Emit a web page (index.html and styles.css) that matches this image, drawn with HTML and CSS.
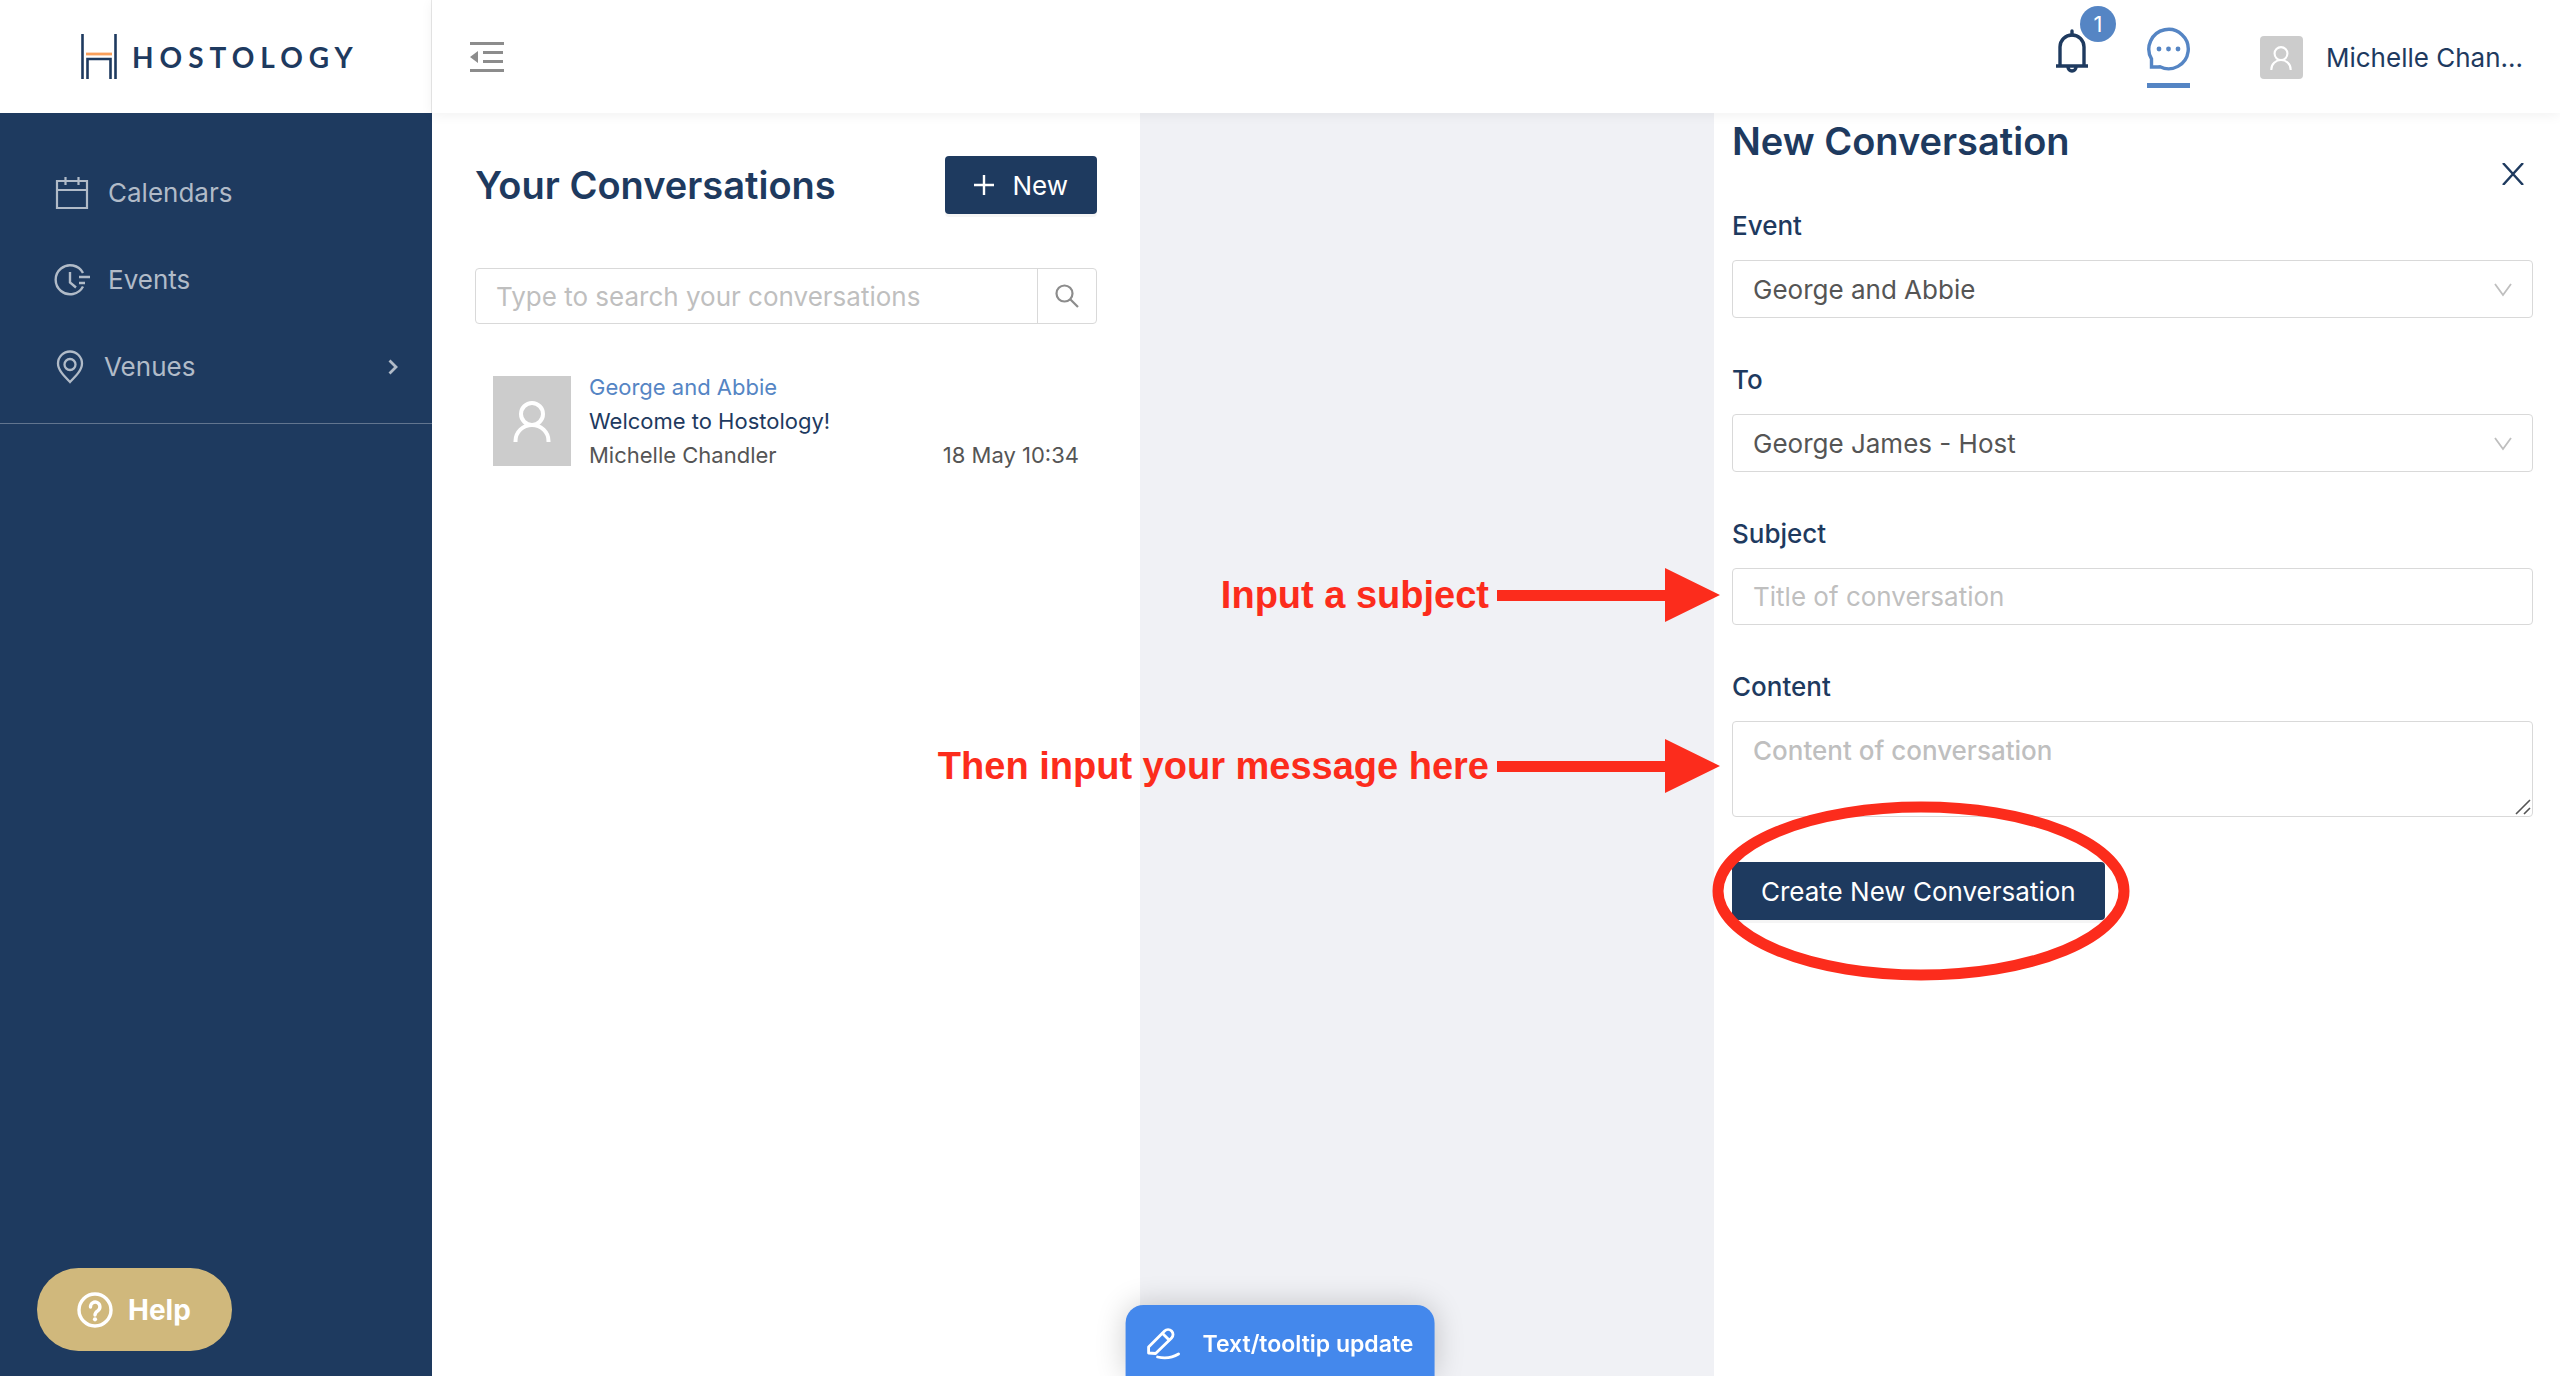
FILE: index.html
```html
<!DOCTYPE html>
<html lang="en">
<head>
  <meta charset="UTF-8" />
  <title>Hostology - Conversations</title>
  <link rel="stylesheet" href="styles.css">
</head>
<body>

  <aside class="sidebar">
    <a class="logo" href="#">
      <svg width="36" height="45" viewBox="0 0 36 45">
        <path d="M1.500 0v45M34.500 0v45M6.500 45V25H29.500V45" fill="none" stroke="#1e3a5f" stroke-width="2.600"/>
        <path d="M5 20h26" stroke="#f9a05c" stroke-width="2.800"/>
      </svg>
      <span>HOSTOLOGY</span>
    </a>
    <nav class="menu">
      <a href="#">
        <svg class="menu-icon" width="36" height="36" viewBox="0 0 36 36" fill="none" stroke="currentColor" stroke-width="2.200">
          <path d="M3 6h30v27H3zM3 15h30M11.500 2v8M24.500 2v8"/>
        </svg>
        Calendars
      </a>
      <a href="#">
        <svg class="menu-icon" width="36" height="36" viewBox="0 0 36 36" fill="none" stroke="currentColor" stroke-width="2.400">
          <path d="M29 11a14.500 14.500 0 1 0 0 13.500M16 10v10.500l6 5M25 15h11M25 21h6"/>
        </svg>
        Events
      </a>
      <a href="#">
        <svg class="menu-icon" width="32" height="36" viewBox="0 0 32 36" fill="none" stroke="currentColor" stroke-width="2.300">
          <path d="M16 33C10 27 4 21 4 14.500a12 12 0 0 1 24 0C28 21 22 27 16 33z"/>
          <circle cx="16" cy="15.500" r="5.500"/>
        </svg>
        Venues
        <svg class="menu-arrow" width="10" height="16" viewBox="0 0 10 16" fill="none" stroke="currentColor" stroke-width="2.800">
          <path d="M1.500 1.500L8 8l-6.500 6.500"/>
        </svg>
      </a>
    </nav>
  </aside>

  <div class="main">
    <header class="topbar">
      <button class="icon-btn" aria-label="Collapse menu">
        <svg width="34" height="30" viewBox="0 0 34 30" fill="#8c8c8c">
          <path d="M0 0h34v3H0zM13 9h20v3H13zM13 18h20v3H13zM0 27h34v3H0zM0 15l8-6v12z"/>
        </svg>
      </button>
      <div class="topbar-right">
        <button class="icon-btn bell" aria-label="Notifications">
          <svg width="34" height="44" viewBox="0 0 34 44" fill="none" stroke="#1e3a5f" stroke-width="3.400">
            <path d="M1 37h32M5 37V18a12 12 0 0 1 24 0v19"/>
            <path d="M17 6V2" stroke-linecap="round"/>
            <path d="M13 38a4 4 0 0 0 8 0"/>
          </svg>
          <span class="badge">1</span>
        </button>
        <button class="icon-btn chat" aria-label="Messages">
          <svg width="43" height="44" viewBox="0 0 43 44" fill="none" stroke="#5585c4" stroke-width="3.400">
            <path d="M4.500 40V31.900A19.700 19.700 0 1 1 13 39.800L11 40z"/>
            <g fill="#5585c4" stroke="none">
              <circle cx="12" cy="22" r="2.400"/><circle cx="21.500" cy="22" r="2.400"/><circle cx="31" cy="22" r="2.400"/>
            </g>
          </svg>
        </button>
        <a class="user" href="#">
          <span class="avatar-small">
            <svg width="22" height="24" viewBox="0 0 37 41" fill="none" stroke="#fff" stroke-width="3.600">
              <circle cx="18.500" cy="13" r="11"/>
              <path d="M2 41v-1a16.500 16 0 0 1 33 0v1"/>
            </svg>
          </span>
          Michelle Chan...
        </a>
      </div>
    </header>

    <div class="columns">
      <section class="list">
        <div class="list-head">
          <h2>Your Conversations</h2>
          <button class="btn">
            <svg width="20" height="20" viewBox="0 0 20 20" stroke="#fff" stroke-width="2.400">
              <path d="M10 0v20M0 10h20"/>
            </svg>
            New
          </button>
        </div>
        <form class="search">
          <input type="text" aria-label="Search conversations" placeholder="Type to search your conversations">
          <button type="button" aria-label="Search">
            <svg width="24" height="24" viewBox="0 0 24 24" fill="none" stroke="#8c8c8c" stroke-width="2.200">
              <circle cx="9.500" cy="9.500" r="8"/>
              <path d="M15.500 15.500l7.500 7.500"/>
            </svg>
          </button>
        </form>
        <article class="conversation">
          <div class="avatar">
            <svg width="38" height="41" viewBox="0 0 37 41" fill="none" stroke="#fff" stroke-width="4">
              <circle cx="18.500" cy="13" r="11"/>
              <path d="M2 41v-1a16.500 16 0 0 1 33 0v1"/>
            </svg>
          </div>
          <div class="conversation-text">
            <a class="event-name" href="#">George and Abbie</a>
            <div>Welcome to Hostology!</div>
            <div class="meta"><span>Michelle Chandler</span><span>18 May 10:34</span></div>
          </div>
        </article>
      </section>

      <section class="thread"></section>

      <section class="panel">
        <h2>New Conversation</h2>
        <button class="icon-btn close" aria-label="Close">
          <svg width="22" height="22" viewBox="0 0 22 22" stroke="#1e3a5f" stroke-width="2.400">
            <path d="M1 0l20 22M21 0L1 22"/>
          </svg>
        </button>
        <form>
          <div class="field">
            <label for="event">Event</label>
            <div class="control">
              <select id="event"><option>George and Abbie</option></select>
              <svg class="caret" width="18" height="14" viewBox="0 0 18 14" fill="none" stroke="#bfbfbf" stroke-width="1.800"><path d="M1 1l8 11 8-11"/></svg>
            </div>
          </div>
          <div class="field">
            <label for="to">To</label>
            <div class="control">
              <select id="to"><option>George James - Host</option></select>
              <svg class="caret" width="18" height="14" viewBox="0 0 18 14" fill="none" stroke="#bfbfbf" stroke-width="1.800"><path d="M1 1l8 11 8-11"/></svg>
            </div>
          </div>
          <div class="field">
            <label for="subject">Subject</label>
            <div class="control">
              <input id="subject" type="text" placeholder="Title of conversation">
              <div class="note">
                Input a subject
                <svg width="223" height="54" viewBox="0 0 223 54" fill="#fc2c1c"><path d="M0 22h168V0l55 27-55 27V33H0z"/></svg>
              </div>
            </div>
          </div>
          <div class="field">
            <label for="content">Content</label>
            <div class="control">
              <textarea id="content" placeholder="Content of conversation"></textarea>
              <svg class="grip" width="16" height="16" viewBox="0 0 16 16" stroke="#555" stroke-width="1.600"><path d="M1 15L15 1M9 15l6-6"/></svg>
              <div class="note">
                Then input your message here
                <svg width="223" height="54" viewBox="0 0 223 54" fill="#fc2c1c"><path d="M0 22h168V0l55 27-55 27V33H0z"/></svg>
              </div>
            </div>
          </div>
          <div class="submit">
            <button type="button" class="btn">Create New Conversation</button>
            <svg class="circle" viewBox="0 0 418 180" fill="none" stroke="#fc2c1c" stroke-width="11"><ellipse cx="209" cy="90" rx="203" ry="84"/></svg>
          </div>
        </form>
      </section>
    </div>
  </div>

  <button class="help">
    <svg width="36" height="36" viewBox="0 0 36 36" fill="none" stroke="#fff" stroke-width="3.400">
      <circle cx="18" cy="18" r="16"/>
      <path d="M13.500 15a4.700 4.700 0 1 1 7.500 3.600c-2 1.400-3 2.200-3 4.400" stroke-linecap="round"/>
      <circle cx="18" cy="27.300" r="2.100" fill="#fff" stroke="none"/>
    </svg>
    Help
  </button>

  <div class="update-bar">
    <svg width="34" height="32" viewBox="0 0 34 32" fill="none" stroke="#fff" stroke-width="2.800">
      <path d="M2 25v-6L18 3a4.600 4.600 0 0 1 7 7L9 25.500z" stroke-linejoin="round"/>
      <path d="M16 5.500l6.500 6.500M11 29c9 2 16 0 21-3" stroke-linecap="round"/>
    </svg>
    Text/tooltip update
  </div>

</body>
</html>
```
FILE: styles.css
```css
* {
  box-sizing: border-box;
}
body {
  margin: 0;
  min-height: 100vh;
  display: flex;
  font-family: Inter, "Liberation Sans", sans-serif;
  font-size: 26px;
  color: #1e3a5f;
  background: white;
}
a {
  color: inherit;
  text-decoration: none;
}
button, input, select, textarea {
  font: inherit;
}
svg {
  flex-shrink: 0;
}
h2 {
  margin: 0;
  font-size: 38px;
  font-weight: 600;
  line-height: 56px;
}

/* Sidebar */
.sidebar {
  flex: 0 0 432px;
  background: #1e3a5f;
}
.logo {
  height: 113px;
  padding-left: 81px;
  display: flex;
  align-items: center;
  gap: 15px;
  background: white;
  color: #1e3a5f;
  border-right: 1px solid #e8e8e8;
  font-family: Lato, sans-serif;
  font-size: 28px;
  font-weight: bold;
  letter-spacing: 6px;
}
.menu {
  padding: 36px 0 13px;
  border-bottom: 1px solid #62758f;
  color: #b1bbc8;
}
.menu a {
  height: 87px;
  padding: 0 34px 0 54px;
  display: flex;
  align-items: center;
  gap: 18px;
}
.menu-arrow {
  margin-left: auto;
}

/* Top bar */
.main {
  flex: 1;
  min-width: 0;
  display: flex;
  flex-direction: column;
}
.topbar {
  height: 113px;
  padding: 0 37px 0 38px;
  display: flex;
  align-items: center;
  justify-content: space-between;
  box-shadow: 0 2px 12px rgba(0,0,0,0.06);
  position: relative;
}
.icon-btn {
  padding: 0;
  border: none;
  background: none;
  display: flex;
  cursor: pointer;
}
.topbar-right {
  height: 113px;
  display: flex;
  align-items: flex-start;
}
.bell {
  margin: 29px 58px 0 0;
  position: relative;
}
.badge {
  position: absolute;
  left: 25px;
  top: -23px;
  width: 36px;
  height: 36px;
  border-radius: 50%;
  background: #5585c4;
  color: white;
  font-size: 22px;
  line-height: 36px;
}
.chat {
  margin-top: 27px;
  padding-bottom: 12px;
  border-bottom: 5px solid #5585c4;
}
.user {
  margin: 36px 0 0 70px;
  display: flex;
  align-items: center;
  gap: 23px;
}
.avatar-small {
  width: 43px;
  height: 43px;
  display: flex;
  align-items: center;
  justify-content: center;
  background: #ccc;
  border-radius: 4px;
}

/* Columns */
.columns {
  flex: 1;
  display: grid;
  grid-template-columns: 354fr 287fr 423fr;
}
.thread {
  background: #f0f1f5;
}

/* Conversation list */
.list {
  padding: 43px;
}
.list-head {
  display: flex;
  align-items: center;
  justify-content: space-between;
}
.btn {
  height: 58px;
  padding: 0 29px;
  display: flex;
  align-items: center;
  gap: 18px;
  background: #1e3a5f;
  color: white;
  border: none;
  border-radius: 4px;
  box-shadow: 0 3px 0 rgba(0,0,0,0.04);
  cursor: pointer;
}
.search {
  margin: 54px 0 46px;
  height: 56px;
  display: flex;
  border: 1px solid #d9d9d9;
  border-radius: 4px;
}
.search input {
  flex: 1;
  min-width: 0;
  padding: 0 20px;
  border: none;
  background: none;
}
.search button {
  width: 59px;
  padding: 0;
  display: flex;
  align-items: center;
  justify-content: center;
  border: none;
  border-left: 1px solid #d9d9d9;
  background: none;
}
::placeholder {
  color: #bfbfbf;
  opacity: 1;
}
.conversation {
  padding: 0 18px;
  display: flex;
  align-items: center;
  gap: 18px;
  font-size: 22px;
  line-height: 34px;
}
.avatar {
  width: 78px;
  height: 90px;
  display: flex;
  align-items: center;
  justify-content: center;
  background: #ccc;
}
.conversation-text {
  flex: 1;
}
.event-name {
  color: #5585c4;
}
.meta {
  display: flex;
  justify-content: space-between;
  color: #555;
}

/* New conversation panel */
.panel {
  padding: 0 27px 0 18px;
  position: relative;
}
.panel h2 {
  margin-bottom: 40px;
}
.close {
  position: absolute;
  top: 50px;
  right: 36px;
}
.field {
  margin-bottom: 45px;
}
.field label {
  display: block;
  margin-bottom: 17px;
  line-height: 34px;
  font-weight: 500;
}
.control {
  position: relative;
}
.control select,
.control input,
.control textarea {
  display: block;
  width: 100%;
  height: 57px;
  padding: 0 20px;
  border: 1px solid #d9d9d9;
  border-radius: 4px;
  background: white;
  color: #555;
}
.control select {
  height: 58px;
  appearance: none;
}
.control textarea {
  height: 96px;
  padding-top: 12px;
  line-height: 34px;
  font-weight: 500;
  resize: none;
}
.caret {
  position: absolute;
  right: 21px;
  top: 23px;
}
.grip {
  position: absolute;
  right: 2px;
  bottom: 2px;
}
.submit {
  width: fit-content;
  position: relative;
}

/* Red notes over the page */
.note {
  position: absolute;
  right: 100%;
  top: 0;
  margin-right: 12px;
  display: flex;
  align-items: center;
  gap: 8px;
  color: #fc2c1c;
  font-family: "Liberation Sans", Arial, sans-serif;
  font-size: 38px;
  font-weight: bold;
  white-space: nowrap;
}
textarea ~ .note {
  top: 18px;
}
.circle {
  position: absolute;
  left: -20px;
  top: -61px;
  width: 418px;
  height: 180px;
  pointer-events: none;
}

/* Floating buttons */
.help {
  position: fixed;
  left: 37px;
  bottom: 25px;
  width: 195px;
  height: 83px;
  padding: 0 0 0 40px;
  display: flex;
  align-items: center;
  gap: 15px;
  border: none;
  border-radius: 42px;
  background: #d0b87c;
  color: white;
  font-size: 28px;
  font-weight: bold;
}
.update-bar {
  position: fixed;
  left: 50%;
  bottom: 0;
  transform: translateX(-50%);
  height: 71px;
  padding: 6px 21px 0;
  display: flex;
  align-items: center;
  gap: 22px;
  border-radius: 18px 18px 0 0;
  background: #4488ec;
  color: white;
  font-size: 23px;
  font-weight: 600;
  box-shadow: 0 0 30px rgba(0,0,0,0.2);
}
```
